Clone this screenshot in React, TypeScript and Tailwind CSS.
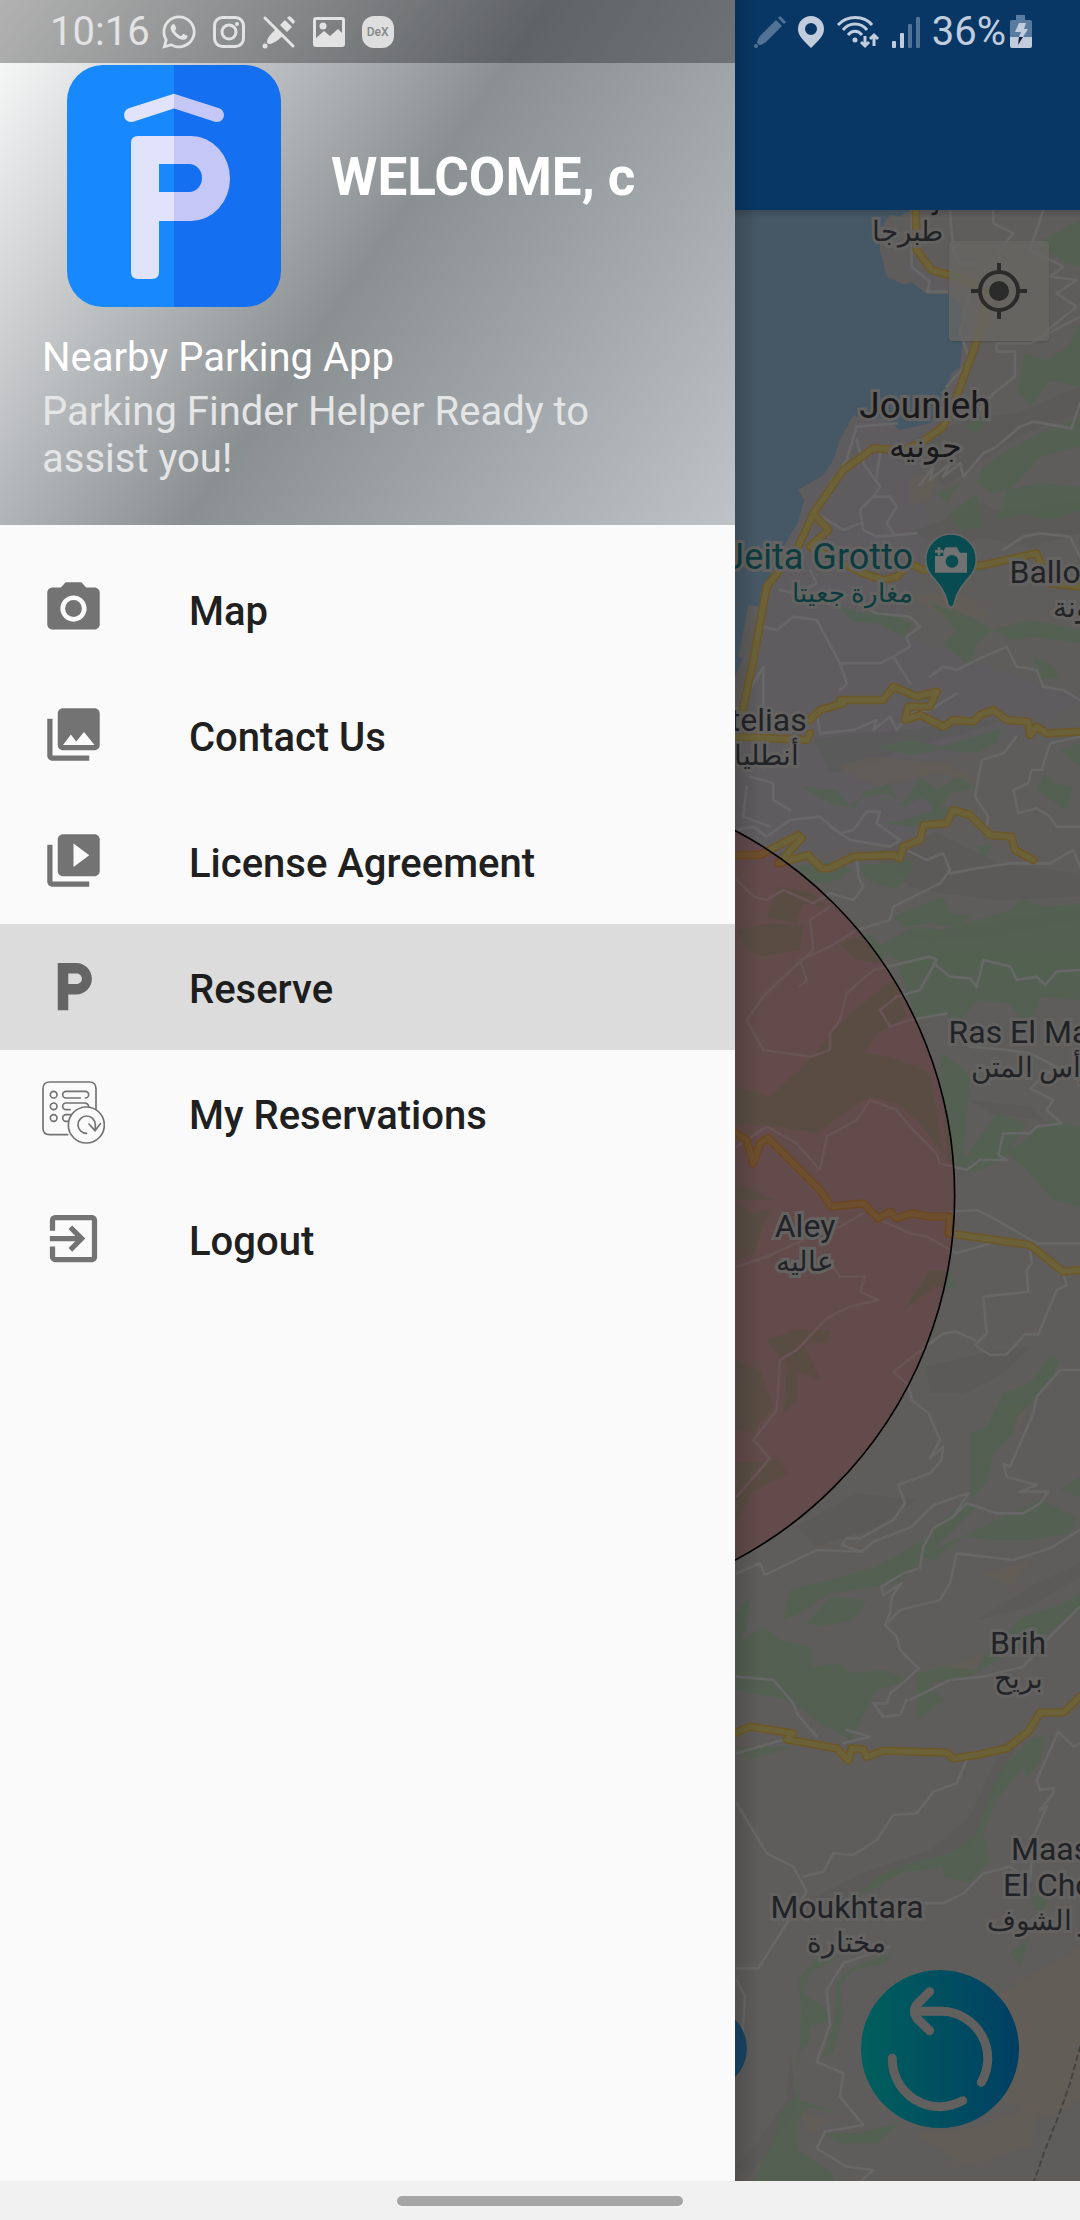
import type { ReactNode } from "react";
import {
  MdExitToApp,
  MdLocalParking,
  MdPhotoCamera,
  MdPhotoLibrary,
  MdVideoLibrary,
} from "react-icons/md";
import { FaWhatsapp } from "react-icons/fa";

const ROBOTO = "font-['Roboto','Noto_Sans',sans-serif]";

/* ---------- Status bar ---------- */

function StatusBar() {
  return (
    <div className="absolute inset-x-0 top-0 z-20 flex h-[63px]">
      <div className="flex w-[735px] max-w-[85%] shrink-0 items-center gap-4 bg-black/30 pl-[50px] text-[#e2e3e2]">
        <time className="-mr-1 text-[40px] leading-none">10:16</time>
        <FaWhatsapp className="size-[38px] shrink-0 -mx-[2px]" />
        <svg className="size-[34px] shrink-0" viewBox="0 0 34 34" fill="none" stroke="currentColor" strokeWidth="3">
          <rect x="2.500" y="2.500" width="29" height="29" rx="8" />
          <circle cx="17" cy="17" r="7" />
          <circle cx="25" cy="9" r="2" fill="currentColor" stroke="none" />
        </svg>
        <svg className="size-[34px] shrink-0" viewBox="0 0 34 34" fill="currentColor">
          <path d="M16 12l7 7-7 6c-3 2-6 4-9 4-1 0-2-1-2-2 0-3 2-6 4-8z" />
          <path d="M18 10l5-5 7 7-5 5z" />
          <path d="M25 3q2-3 4-1l3 3q2 2-1 4z" />
          <circle cx="3" cy="31" r="2.500" />
          <path d="M5 2l27 27" stroke="#858786" strokeWidth="3" />
          <path d="M3 3l28 28" stroke="currentColor" strokeWidth="3" strokeLinecap="round" />
        </svg>
        <svg className="size-[34px] shrink-0" viewBox="0 0 34 34" fill="currentColor">
          <path
            fillRule="evenodd"
            d="M4 2h26a3 3 0 013 3v24a3 3 0 01-3 3H4a3 3 0 01-3-3V5a3 3 0 013-3zm0 3v18l8-7 6 5 8-7 4 4V5z"
          />
          <circle cx="11" cy="11" r="3.500" />
        </svg>
        <span className="flex size-8 items-center justify-center rounded-[12px] bg-[#dddedd] text-[12px] font-medium leading-none text-[#858786]">
          DeX
        </span>
      </div>
      <div className="flex min-w-0 flex-1 items-center justify-end gap-3 pr-12 text-[#c1cddd]">
        <svg className="size-8 shrink-0 opacity-40" viewBox="0 0 32 32" fill="currentColor">
          <path d="M22 4l6 6-15 15c-3 3-6 4-8 4-1-1-2-2-2-3 1-3 2-5 4-7z" />
          <path d="M24 2l2-2 6 6-2 2z" />
          <circle cx="2" cy="30" r="2" />
        </svg>
        <svg className="h-8 w-[26px] shrink-0" viewBox="0 0 26 32" fill="currentColor">
          <path fillRule="evenodd" d="M13 0a13 13 0 0113 13c0 7-6 12-13 19C6 25 0 20 0 13A13 13 0 0113 0zm0 7a6 6 0 100 12 6 6 0 000-12z" />
        </svg>
        <svg className="h-[34px] w-[44px] shrink-0" viewBox="0 0 44 34" fill="none" stroke="currentColor" strokeWidth="3">
          <path d="M2 10c9-10 26-10 34 0M7 15c6-8 18-8 24 0M12 20c4-5 10-5 14 0" />
          <circle cx="19" cy="25" r="2.500" fill="currentColor" stroke="none" />
          <path d="M29 21v10M25 27l4 4 4-4M38 31V20M34 24l4-4 4 4" />
        </svg>
        <svg className="h-8 w-7 shrink-0" viewBox="0 0 28 32" fill="currentColor">
          <rect x="0" y="25" width="4" height="7" rx="1" />
          <rect x="8" y="17" width="4" height="15" rx="1" />
          <rect x="16" y="8" width="4" height="24" rx="1" opacity=".4" />
          <rect x="24" y="1" width="4" height="31" rx="1" opacity=".4" />
        </svg>
        <span className="flex items-center gap-1">
          <span className="text-[40px] leading-none">36%</span>
          <svg className="h-[34px] w-[22px] shrink-0" viewBox="0 0 22 34">
            <path d="M6 0h9v5h-9zM0 7q0-2 2-2h18q2 0 2 2v15H0z" fill="#5a7ba0" />
            <path d="M0 22h22v9q0 2-2 2H2q-2 0-2-2z" fill="#c1cddd" />
            <path d="M9 8h7l-2 6h4l-5 8H9l2-5H5z" fill="#c1cddd" />
            <path d="M9 22h4l-5 8z" fill="#0a1c30" />
          </svg>
        </span>
      </div>
    </div>
  );
}

/* ---------- Drawer ---------- */

function AppLogo() {
  return (
    <svg className="h-[242px] w-[214px] shrink-0" viewBox="0 0 214 242" role="img" aria-label="Nearby Parking logo">
      <defs>
        <clipPath id="logo-tile">
          <rect width="214" height="242" rx="36" />
        </clipPath>
        <linearGradient id="logo-ink" gradientUnits="userSpaceOnUse" x1="0" x2="214" y1="0" y2="0">
          <stop offset=".5" stopColor="#e1e3fb" />
          <stop offset=".5" stopColor="#c5c8f7" />
        </linearGradient>
      </defs>
      <g clipPath="url(#logo-tile)">
        <rect width="107" height="242" fill="#1889fd" />
        <rect x="107" width="107" height="242" fill="#146ff1" />
      </g>
      <path d="M64 50l43-14 43 14" fill="none" stroke="url(#logo-ink)" strokeWidth="14" strokeLinecap="round" />
      <path
        fillRule="evenodd"
        fill="url(#logo-ink)"
        d="M71 71h53a39 42.500 0 010 85H92v51q0 7-7 7H71q-7 0-7-7V78q0-7 7-7zM92 99v28h30a13 14 0 000-28z"
      />
    </svg>
  );
}

function ReservationsIcon() {
  return (
    <svg className="size-[63px]" viewBox="126 483 189 189" fill="none" stroke="currentColor" strokeWidth="5" strokeLinecap="round">
      <path d="M203 644H149q-20 0-20-20V506q0-20 20-20H268q20 0 20 20V566" />
      <circle cx="161" cy="524" r="10" />
      <circle cx="161" cy="559" r="10" />
      <circle cx="161" cy="594" r="10" />
      <path d="M241 534H198a10 10 0 010-20H256a10 10 0 010 20M210 569H198a10 10 0 010-20H254q10 0 12 10M204 604h-6a10 10 0 010-20H214" />
      <circle cx="259" cy="615" r="54" />
      <path d="M260 640a26 26 0 1126-26V632M267 612l18 20 16-21" />
    </svg>
  );
}

type Item = { label: string; icon: ReactNode; selected?: boolean };

const items: Item[] = [
  { label: "Map", icon: <MdPhotoCamera className="size-[63px]" /> },
  { label: "Contact Us", icon: <MdPhotoLibrary className="size-[63px]" /> },
  { label: "License Agreement", icon: <MdVideoLibrary className="size-[63px]" /> },
  { label: "Reserve", icon: <MdLocalParking className="size-[63px]" />, selected: true },
  { label: "My Reservations", icon: <ReservationsIcon /> },
  { label: "Logout", icon: <MdExitToApp className="size-[63px]" /> },
];

function Drawer() {
  return (
    <aside className="z-10 flex w-[735px] max-w-[85%] shrink-0 flex-col bg-[#fafafa]">
      <header className="bg-[linear-gradient(125deg,#ffffff,#8a8f92_50%,#bdc3c7)] px-[42px] pb-[43px] pt-[65px] text-[40px] leading-[47px] text-white">
        <div className="flex items-start pl-[25px]">
          <AppLogo />
          <h1 className="ml-[50px] mt-20 whitespace-nowrap text-[53px] font-bold leading-[64px]">WELCOME, c</h1>
        </div>
        <p className="mt-[27px]">Nearby Parking App</p>
        <p className="mt-[7px] text-[#e4e5e6]">Parking Finder Helper Ready to assist you!</p>
      </header>
      <nav className="py-[21px]" aria-label="Main">
        <ul>
          {items.map((item) => (
            <li key={item.label}>
              <button
                type="button"
                aria-current={item.selected ? "page" : undefined}
                className={
                  item.selected
                    ? "flex h-[126px] w-full items-center gap-[84px] bg-[#dcdcdc] px-[42px] text-left text-[40px] font-medium text-[#1d1d1d]"
                    : "flex h-[126px] w-full items-center gap-[84px] px-[42px] text-left text-[40px] font-medium text-[#202020]"
                }
              >
                <span className={item.selected ? "pb-px text-[#656565]" : "pb-px text-[#737373]"}>{item.icon}</span>
                <span className="pt-1.5">{item.label}</span>
              </button>
            </li>
          ))}
        </ul>
      </nav>
    </aside>
  );
}

/* ---------- Map ---------- */

const greenAreas = [
  // north east hills
  "M920 130L1050 60V200L1000 185L950 150z",
  "M885 460L950 480L1050 420V560L960 540L900 620L860 570z",
  "M1050 370V440L1000 470z",
  "M760 800L850 740L950 690L1050 650V740L930 770L850 860L790 880L740 850z",
  "M830 870L930 850L1050 860V930L960 960L880 940L800 960z",
  "M620 880L690 850L650 910zM655 940L740 880L760 980L690 990z",
  "M700 680L780 640L740 700z",
  "M320 1215L400 1240L450 1230L550 1270L520 1310L440 1270L370 1265z",
  "M600 1210L700 1240L790 1290L740 1330L720 1400L640 1330L680 1290z",
  "M790 1290L900 1260L1050 1290V1330L920 1310L840 1320z",
  "M910 1370L960 1390L990 1430L930 1440z",
  // central ridge
  "M440 1640L540 1620L640 1640L810 1585L805 1625L740 1660L640 1650L540 1665z",
  "M215 1760L320 1770L370 1830L400 1775L480 1750L510 1820L570 1730L620 1770L680 1730L735 1760L660 1780L620 1840L580 1790L520 1820L480 1780L400 1790L350 1820L300 1810z",
  "M920 1770L945 1720L970 1750L1030 1760L1010 1830z",
  "M990 1650L1050 1630V1700z",
  "M200 2000L290 1985L370 2010L300 2050L240 2050z",
  "M390 1995L550 1980L550 2000L500 2070L440 2050L400 2030z",
  "M460 1870L520 1860L640 1820L700 1840L660 1860L540 1880z",
  "M740 1940L790 1930L760 1975z",
  "M490 2150L640 2090L660 2140L725 2145L690 2185L600 2170L520 2180z",
  "M640 2190L840 2130L880 2095L940 2120L1050 2110V2300L950 2330L880 2340L740 2310L640 2300L500 2280L440 2240L560 2180z",
  "M500 2290L640 2250L1050 2260V2400L930 2390L900 2500L840 2410L740 2400L680 2480L640 2440L560 2460L540 2400z",
  "M630 2560L680 2590L720 2630L700 2880L800 2740L890 2770L820 2880L720 2920L650 2880z",
  "M830 2860L960 2760L1050 2780V3020L970 3000L880 2900z",
  // inside the search radius
  "M20 2190L120 2170L220 2180L210 2250L100 2270L50 2250z",
  "M140 2060L250 2080L290 2120L220 2110L200 2170L110 2150z",
  "M330 2230L420 2200L470 2270L440 2290L380 2280z",
  "M340 2460L500 2330L530 2450L440 2500L400 2560L480 2570L600 2620L640 2860L560 2760L500 2710L420 2690L340 2740L260 2800L140 2780L20 2770V2660L120 2690L220 2600z",
  "M20 2950L70 2970L130 3000H20zM20 3010L70 3040L120 3030L70 3160L20 3180z",
  "M110 3420L200 3390L300 3390L290 3430L220 3430L270 3540L200 3510L200 3600L160 3640L170 3500z",
  "M20 3480L90 3510L130 3620L70 3700L20 3690z",
  "M20 3790L150 3780L170 3820L60 3880L20 3970z",
  "M600 3210L660 3215L680 3265L610 3260L510 3340L540 3300z",
  // south east valleys
  "M960 3465L990 3480L950 3560L860 3650L850 3700L790 3760L770 3850L720 3900L720 3700L770 3680L820 3580L900 3550z",
  "M1050 3830V3890L990 3870z",
  "M800 3960L930 3900L1040 3950L1020 4000L900 4020L780 4020L700 4010L610 4080L570 4070z",
  "M20 4240L60 4190L50 4290L20 4330zM160 4260L180 4170L300 4140L440 4100L580 4020L700 3900L740 3920L620 4040L500 4150L300 4180L210 4240z",
  "M230 4270L300 4190L410 4200L370 4260L270 4280z",
  "M20 4330L100 4280L150 4320L240 4340L250 4400L330 4390L360 4420L460 4410L540 4440L440 4470L360 4620L270 4570L180 4500L20 4470z",
  "M560 4420L640 4400L740 4410L780 4340L880 4250L1000 4210L1050 4180V4230L950 4300L850 4350L720 4430L600 4450L640 4500L560 4560z",
  "M20 4640L190 4640L60 4680z",
  "M790 4750L830 4690L900 4620L950 4600L930 4680L890 4740L880 4700L800 4800L760 4900L780 4980L720 5050L640 5030L640 5000L510 5020L430 5070L380 5090L440 5030L540 4990L660 4960L740 4900z",
  "M900 5090L960 5080L930 5160zM840 5260L900 5210L870 5300z",
  "M205 5340L260 5270L330 5270L240 5320L220 5380L280 5420L300 5460L240 5480L230 5550L215 5440z",
  "M320 5350L370 5300L480 5260L470 5290L370 5310L330 5360L340 5440L310 5560L280 5570L310 5470z",
  "M215 5420L240 5500L200 5580L210 5700L350 5750L240 5720L200 5760L200 5850L310 5920V5945H70L130 5820L150 5740L200 5680z",
  "M280 5800L380 5800L510 5770L440 5830L330 5830z",
];

const shadedSlopes = [
  "M540 1000L640 960L720 900L800 930L1050 900V1000L900 1040L760 1010L640 1040z",
  "M250 1620L380 1600L540 1590L700 1560L820 1560L700 1600L540 1640L400 1700L300 1720z",
  "M540 720L740 650L860 640L1050 560V640L880 700L760 780L640 860z",
  "M420 1960L620 1900L800 1990L1050 2020V2090L800 2100L640 2080L540 2060z",
  "M500 2200L700 2180L1050 2120V2160L800 2210L600 2230z",
  "M590 3500L760 3460L900 3440L820 3520L700 3580L600 3580z",
  "M200 3980L380 3880L560 3900L440 3980L260 4040z",
  "M740 4260L900 4160L1050 4090V4130L900 4220z",
  "M240 5100L400 5020L600 4950L720 4850L800 4680L880 4600L800 4760L720 4940L520 5010L380 5090z",
  "M20 5900L100 5800L170 5700L180 5560L200 5720L120 5860L60 5920z",
  "M720 2700L900 2720L940 2760L780 2740z",
];

const lightSlopes = [
  "M540 830L620 830L600 900L540 920z",
  "M320 1700L420 1670L640 1690L760 1750L620 1720L440 1760z",
  "M780 5400L1050 5240V5700L960 5760L820 5700z",
  "M560 5800L760 5780L940 5700L900 5840L700 5900z",
  "M760 4120L900 4080L840 4160zM820 3620L900 3600L860 3700z",
  "M600 4420L760 4360L700 4440zM210 5740L300 5760L240 5800z",
  "M520 1180L700 1180L780 1250L640 1250z",
];

const localRoads = [
  "M545 30V200L600 245L590 275H650M660 35L670 150L690 190H740M790 30V70L850 100L800 160M940 30L900 150L1000 200L960 230L1040 240L980 280L1040 320L940 400",
  "M1050 350L900 430H800V455H855V530L790 580L740 640M720 280L690 400L720 480L650 560",
  "M1050 610L1025 685L910 665L870 680L800 740L760 760L700 830L690 790L640 830L660 790L600 840L610 800L570 855",
  "M500 670L380 680L350 780L300 850L250 950M380 720L400 790L450 860L430 890L390 930L400 990L440 1010L560 1000",
  "M450 760L440 830M430 890H480L500 920L470 970L490 1000M260 940L340 990L390 970",
  "M820 1050L880 1010L930 1000L1020 1010L1050 1070M240 1110L260 1150L200 1180L150 1170",
  "M100 1560V1400L40 1500M100 1280L140 1290L190 1250L260 1260L330 1390H450L490 1370L540 1450M330 1390L350 1450L330 1470M380 1210L440 1240L540 1250L570 1280L530 1310L540 1340L490 1370",
  "M600 1430L640 1400L680 1410L750 1375L830 1340L860 1400L920 1410L940 1460L1000 1470L1050 1500",
  "M260 1540L270 1600L370 1590L440 1560L430 1590L480 1550L500 1590L540 1540L600 1530L680 1480",
  "M860 1610L820 1660L755 1680L735 1790L775 1850L770 1880M1050 1610L960 1630L935 1710H905L895 1750L850 1770L865 1840L920 1825L960 1850L980 1880H1050",
  "M20 1890L70 1880L110 1910L180 1860L270 1850L330 1900L370 1890L410 1835H450L440 1870L510 1920L480 1940L360 1920L300 1880M50 1760L40 1850L120 1880M60 1730L130 1750V1800L180 1830",
  "M510 1940L590 1980L640 1960L660 2010L630 2050L490 2120L480 2160L380 2190L300 2240L210 2280L230 2340L210 2360M660 2020L740 2005L840 1990L960 1990L1030 1950L1050 2000",
  "M380 1980L385 2030L400 2060L370 2100L300 2080L250 2110L160 2070L110 2100L70 2090L20 2040",
  "M300 2120L240 2160L250 2250L140 2350L100 2390L50 2460L100 2550L240 2570L300 2550V2500L330 2460L350 2380L430 2310L600 2270L620 2280L570 2370L500 2390L450 2430L480 2480L540 2460L650 2440",
  "M610 2290L660 2330L720 2335L740 2360L760 2280L840 2300L860 2340L920 2330L945 2355L980 2315L1050 2310M720 2540L830 2550L900 2560L980 2600L900 2665L970 2700L950 2730L995 2770L920 2780L900 2800H820L805 2865L830 2880L750 2880L710 2910L630 2890L620 2860L540 2780L500 2730L420 2700L380 2760L290 2810L270 2910L200 2830L110 2780L20 2840",
  "M660 3035L740 3030L800 3060L920 3130H1050M900 3150L905 3190L890 3210L895 3275L760 3290L770 3400L735 3435L780 3465L830 3463L885 3403H925L980 3270L1010 3255L1000 3220M735 3420L680 3395L640 3400L490 3515L535 3555L545 3600L595 3640L630 3720L600 3775L640 3740L635 3780L600 3820L505 3855L525 3910L490 3960L390 4015H350L335 4035L395 4055L430 4025L545 3980L610 3915L715 3880L670 3950L610 3985L580 4040L570 4105L520 4120L455 4160L460 4185L515 4150L485 4190L480 4240L465 4275L500 4310L510 4350L565 4405L540 4430L480 4480L470 4510L430 4510L460 4550L510 4545L530 4500",
  "M20 3200L110 3170L220 3120L330 3080L400 3040M450 3060L540 3100L590 3110L680 3160L780 3130M310 3200L330 3230H405L390 3275L445 3300L360 3320L290 3355L200 3450L150 3480L140 3630L70 3720L120 3775L20 3890",
  "M20 4120L90 4090L105 4125L260 4050L395 4055M670 3950L710 3910L800 3940L880 3940L930 3910L955 3875H870L920 3855L830 3830L820 3790L840 3800L910 3640L920 3590L990 3510H1050",
  "M1050 3990L960 4045L850 4080L680 4060L660 4150L630 4200L510 4230L465 4275M1050 4220L960 4310L880 4400L760 4430L660 4440L580 4480L540 4500",
  "M20 4430L130 4440L190 4510L200 4540L260 4610M20 4660L190 4610M20 4810L110 4960L190 5000L230 5075L85 5305H20M220 5030L280 5015L310 4960L370 4965L440 4920L490 4845L560 4840L610 4775L680 4750L710 4680M350 4590L420 4610L340 4630M580 5110H640L700 5080L760 5020L840 5000L900 5040L910 4910L950 4820L930 4830L970 4780V4765L930 4770L920 4740L985 4595L1030 4640L1050 4630",
  "M480 5240L340 5290L290 5370L300 5475L260 5585L340 5620L330 5690L400 5775L285 5795L260 5845L350 5900L430 5910L390 5945M20 5340L45 5390L35 5550",
];

const highways = [
  "M557 30L560 150L605 210L710 240L765 280L755 380L720 480L680 590L640 680L570 730L520 750L430 745L340 810L250 940L205 1040L110 1160L70 1380L40 1520L20 1600",
  "M250 940L295 990L240 1040L320 1080L400 1120L460 1140L500 1130L540 1090L580 1110L760 1095L920 1060L940 1110L960 1150L1050 1160",
  "M330 1500H460L490 1460L560 1490L620 1475L600 1520H535L525 1560L570 1545L640 1580L670 1560L730 1565L750 1545L790 1530L830 1560L895 1565L900 1605L920 1580L950 1600L1050 1595",
  "M20 1610L230 1620L240 1600M240 1560L270 1530L340 1510",
  "M20 1965H90L205 1905L215 1915L145 1990L235 1965L275 2005L300 2005L370 1970L490 1965L510 1975L520 1940L570 1920L580 1875L650 1870L670 1830L720 1845L780 1905L845 1910L855 1950L910 1980",
  "M20 2800L50 2820L70 2890L90 2830L115 2815L270 2970L305 3020L400 3010L445 3055L480 3035L500 3055L545 3040L600 3050L660 3050L655 3100L900 3135L1000 3215L1050 3210",
  "M20 4598L60 4580L190 4600L170 4618L320 4645L355 4682L365 4645L400 4648L410 4670L460 4652L650 4658L670 4675L740 4665L830 4645L895 4595L930 4538H1000L1050 4490",
];

function Terrain() {
  return (
    <svg
      className="absolute inset-0 h-full w-full"
      viewBox="15 30 1035 5913"
      preserveAspectRatio="xMinYMin slice"
      fill="none"
      strokeLinejoin="round"
      strokeLinecap="round"
      aria-hidden="true"
    >
      <rect x="0" y="0" width="1100" height="6000" fill="#5f5d5b" />
      <path
        d="M450 160L650 290L640 640L380 660L240 860L110 1180L20 1500V2000L640 1900L560 1700L900 1600L1050 1500L500 1300L600 1000L560 820L700 600L780 300z"
        fill="#5f5c60"
      />
      {shadedSlopes.map((d) => (
        <path key={d} d={d} fill="#595856" opacity=".6" />
      ))}
      {lightSlopes.map((d) => (
        <path key={d} d={d} fill="#655e57" opacity=".6" />
      ))}
      {greenAreas.map((d) => (
        <path key={d} d={d} fill="#516150" opacity=".8" />
      ))}
      <path
        d="M15 30H540L510 50L480 45L450 90V150L470 230L525 255L545 245L590 282H650L690 310L705 360L690 500L665 520L650 560L640 640L600 670L510 690L460 650L420 665L370 645L330 720L310 780L280 825L205 870L222 900L205 965L160 1040L130 1110L90 1220L55 1215L25 1370L38 1375L15 1430z"
        fill="#465866"
      />
      <g stroke="#676768" strokeWidth="8">
        {localRoads.map((d) => (
          <path key={d} d={d} />
        ))}
      </g>
      <g stroke="#6d5727" strokeWidth="25">
        {highways.map((d) => (
          <path key={d} d={d} />
        ))}
      </g>
      <g stroke="#6b6239" strokeWidth="16">
        {highways.map((d) => (
          <path key={d} d={d} />
        ))}
      </g>
      <path d="M1050 5540L1020 5650L985 5750L945 5850L912 5945" stroke="#444444" strokeWidth="6" strokeDasharray="14 14" />
      <path d="M620 30v4q0 8-12 8" stroke="#1e1f22" strokeWidth="8" />
      <circle cx="-564" cy="2986" r="1238" fill="#6d070a" fillOpacity=".2" stroke="#000000" strokeWidth="5" />
      <circle cx="-72" cy="5545" r="123" fill="#184566" />
      {/* attraction pin */}
      <path
        d="M663 1222q-8 0-11-16c-6-34-32-60-50-82-10-13-15-28-15-46a76 76 0 01152 0c0 18-5 33-15 46-18 22-44 48-50 82q-3 16-11 16z"
        fill="#084b50"
        stroke="#666766"
        strokeWidth="5"
      />
      <path
        fillRule="evenodd"
        fill="#707271"
        d="M615 1068H640V1052L648 1042H680L690 1058H711V1118H615zM666 1065a19 19 0 100 38 19 19 0 000-38zM623 1042h8v8h8v8h-8v8h-8v-8h-8v-8h8z"
      />
    </svg>
  );
}

type Place = { name: string; arabic: string; place: string };

const places: Place[] = [
  { name: "Ballouneh", arabic: "بلونة", place: "left-[345px] top-[346px]" },
  { name: "Antelias", arabic: "أنطلياس", place: "left-[14px] top-[494px]" },
  { name: "Ras El Matn", arabic: "رأس المتن", place: "left-[298px] top-[806px]" },
  { name: "Aley", arabic: "عاليه", place: "left-[70px] top-[1000px]" },
  { name: "Brih", arabic: "بريح", place: "left-[283px] top-[1417px]" },
  { name: "Moukhtara", arabic: "مختارة", place: "left-[112px] top-[1681px]" },
];

const HALO = "[-webkit-text-stroke:6px_#646361] [paint-order:stroke_fill]";

function PlaceLabels() {
  return (
    <div className={`text-[32px] leading-8 text-[#222327] ${HALO}`}>
      <p lang="ar" dir="rtl" className="absolute left-[172px] top-[6px] w-max -translate-x-1/2 text-[28px]">
        طبرجا
      </p>
      <div className="absolute left-[190px] top-[180px] flex w-max -translate-x-1/2 flex-col items-center gap-2 text-[#19191b]">
        <p className="text-[37px]">Jounieh</p>
        <p lang="ar" dir="rtl">جونيه</p>
      </div>
      <div className="absolute left-[178px] top-[331px] flex w-max -translate-x-full flex-col items-end gap-1 text-[#0c3c3f]">
        <p className="text-[36px]">Jeita Grotto</p>
        <p lang="ar" dir="rtl" className="text-[26px]">مغارة جعيتا</p>
      </div>
      {places.map((p) => (
        <div key={p.arabic} className={`absolute flex w-max -translate-x-1/2 flex-col items-center gap-1 ${p.place}`}>
          <p>{p.name}</p>
          <p lang="ar" dir="rtl" className="text-[28px]">{p.arabic}</p>
        </div>
      ))}
      <div className="absolute left-[252px] top-[1623px] flex w-max flex-col items-start gap-1">
        <p className="pl-6">Maasser</p>
        <p className="pl-4">El Chouf</p>
        <p lang="ar" dir="rtl" className="text-[28px]">معاصر الشوف</p>
      </div>
    </div>
  );
}

function MapView() {
  return (
    <main className="relative flex-1 overflow-hidden bg-[#5f5d5b]">
      <Terrain />
      <PlaceLabels />
      <button
        type="button"
        aria-label="My location"
        className="absolute right-[31px] top-[31px] flex size-[100px] items-center justify-center rounded bg-[#666663]/80 shadow"
      >
        <svg className="size-14" viewBox="0 0 56 56" fill="none" stroke="#2b2b2b" strokeWidth="4">
          <circle cx="28" cy="28" r="19" />
          <circle cx="28" cy="28" r="10" fill="#2b2b2b" stroke="none" />
          <path d="M28 0v8M28 48v8M0 28h8M48 28h8" />
        </svg>
      </button>
      <button
        type="button"
        aria-label="Reset map"
        className="absolute bottom-[53px] right-[61px] flex size-[158px] items-center justify-center rounded-full bg-linear-to-r from-[#005f5c] to-[#003f63]"
      >
        <svg className="size-[158px]" viewBox="393 810 474 474" fill="none" stroke="#62605e" strokeWidth="27" strokeLinecap="round" strokeLinejoin="round">
          <path d="M487 1075A142 142 0 00698 1202M754 1147A142 142 0 00640 934H562M599 875L562 912Q545 934 562 956L599 992" />
        </svg>
      </button>
      <div className="absolute inset-x-0 top-0 h-2 bg-linear-to-b from-black/15 to-transparent" />
    </main>
  );
}

/* ---------- Screen ---------- */

export default function App() {
  return (
    <div className={`relative flex min-h-screen flex-col bg-[#fafafa] ${ROBOTO}`}>
      <StatusBar />
      <div className="flex flex-1">
        <Drawer />
        <div className="relative flex min-w-0 flex-1 flex-col">
          <div className="h-[210px] bg-[#083766]" />
          <MapView />
          <div className="pointer-events-none absolute inset-y-0 left-0 w-6 bg-linear-to-r from-black/15 to-transparent" />
        </div>
      </div>
      <footer className="flex h-[39px] items-center justify-center bg-[#f1f1f1]">
        <button type="button" aria-label="Home" className="h-[10px] w-[286px] rounded-full bg-[#a5a5a5]" />
      </footer>
    </div>
  );
}
